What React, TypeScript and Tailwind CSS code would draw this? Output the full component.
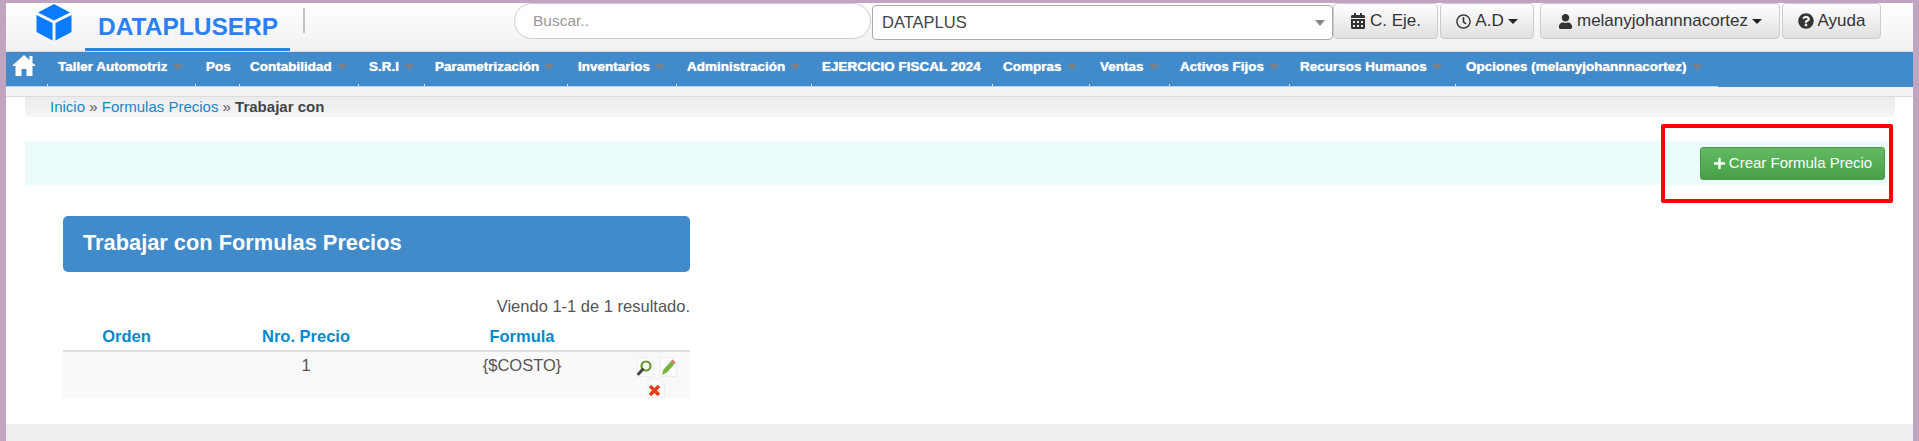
import React from "react";
import { FaCalendarAlt, FaRegClock, FaPlus, FaQuestionCircle, FaUser } from "react-icons/fa";

const menu = [
  { label: "Taller Automotriz", width: "w-[148px]", caret: true },
  { label: "Pos", width: "w-[44px]", caret: false },
  { label: "Contabilidad", width: "w-[119px]", caret: true },
  { label: "S.R.I", width: "w-[66px]", caret: true },
  { label: "Parametrización", width: "w-[143px]", caret: true },
  { label: "Inventarios", width: "w-[109px]", caret: true },
  { label: "Administración", width: "w-[135px]", caret: true },
  { label: "EJERCICIO FISCAL 2024", width: "w-[181px]", caret: false },
  { label: "Compras", width: "w-[97px]", caret: true },
  { label: "Ventas", width: "w-[80px]", caret: true },
  { label: "Activos Fijos", width: "w-[120px]", caret: true },
  { label: "Recursos Humanos", width: "w-[166px]", caret: true },
  { label: "Opciones (melanyjohannnacortez)", width: "w-[263px]", caret: true },
];

const Caret = ({ className }: { className: string }) => (
  <span className={`inline-block w-0 h-0 border-x-transparent ${className}`} />
);

const Cube = () => (
  <svg viewBox="0 0 38 38" className="w-[38px] h-[38px]" fill="#0a7bff">
    <path d="M19 1 L35 9.5 L19 17.5 L3 9.5 Z" />
    <path d="M1.5 12 L17.5 20 L17.5 37.5 L1.5 29 Z" />
    <path d="M36.5 12 L20.5 20 L20.5 37.5 L36.5 29 Z" />
  </svg>
);

const Home = () => (
  <svg viewBox="0 0 24 22" className="w-[24px] h-[22px]" fill="#fff">
    <path d="M12 1 L24 12 L20.5 12 L20.5 22 L14.5 22 L14.5 15 L9.5 15 L9.5 22 L3.5 22 L3.5 12 L0 12 Z" />
    <rect x="17.5" y="2" width="3" height="6" />
  </svg>
);

const PageBack = ({ children }: { children: React.ReactNode }) => (
  <svg viewBox="0 0 18 20" className="w-[18px] h-[20px]">
    <path d="M1 0.5 H12 L17.5 6 V19.5 H1 Z" fill="#fbfbfb" stroke="#eeeeee" />
    {children}
  </svg>
);

const Button = ({ className, children }: { className: string; children: React.ReactNode }) => (
  <div
    className={`flex items-center justify-center gap-[4px] rounded-[4px] border border-[#cccccc] bg-gradient-to-b from-white to-[#e0e0e0] text-[17px] text-[#333333] ${className}`}
  >
    {children}
  </div>
);

const Header = () => (
  <div className="flex h-[49px] bg-gradient-to-b from-white to-[#f1f1f1] border-b border-[#dddddd]">
    <div className="w-[29px]" />
    <Cube />
    <div className="ml-[12px] w-[205px] h-[48px] border-b-[3px] border-[#2f80ed] pl-[13px] pt-[8px] font-bold text-[24.5px] leading-[32px] text-[#2a80f5] whitespace-nowrap">
      DATAPLUSERP
    </div>
    <div className="ml-[13px] mt-[5px] w-[2px] h-[25px] bg-[#c4c4c4]" />
    <div className="ml-[209px] w-[357px] h-[36px] rounded-[18px] border border-[#cccccc] bg-white pl-[18px] text-[15.5px] leading-[34px] text-[#999999]">
      Buscar..
    </div>
    <div className="ml-[1px] mt-[2px] w-[461px] h-[35px] rounded-[4px] border border-[#aaaaaa] bg-white pl-[9px] pr-[7px] flex items-center justify-between text-[16.5px] text-[#444444]">
      DATAPLUS
      <Caret className="border-x-[5px] border-t-[6px] border-t-[#888888]" />
    </div>
    <div className="flex h-[36px]">
      <Button className="w-[105px]">
        <FaCalendarAlt size={16} />C. Eje.
      </Button>
      <Button className="w-[94px] ml-[2px]">
        <FaRegClock size={15} />A.D
        <Caret className="border-x-[5px] border-t-[5px] border-t-[#222222]" />
      </Button>
      <Button className="w-[240px] ml-[6px]">
        <FaUser size={15} />melanyjohannnacortez
        <Caret className="border-x-[5px] border-t-[5px] border-t-[#222222]" />
      </Button>
      <Button className="w-[99px] ml-[2px]">
        <FaQuestionCircle size={16} />Ayuda
      </Button>
    </div>
  </div>
);

const Nav = () => (
  <div className="-mx-[6px] h-[35px] flex border-x-[6px] border-[#5f7fb6] bg-[#428bca]">
    <div className="w-[41px] pl-[6px] pt-[2px] border-b border-[#b8d5ea]">
      <Home />
    </div>
    {menu.map((item) => (
      <div
        key={item.label}
        className={`${item.width} relative pl-[11px] pt-[6px] flex items-start gap-[5px] border-b border-[#b8d5ea] text-[13.5px] leading-[17px] font-bold text-white whitespace-nowrap [text-shadow:0_0_1px_#ffffff]`}
      >
        <span className="absolute left-0 bottom-0 w-px h-[2px] bg-[#dfeaf3]" />
        {item.label}
        {item.caret && <Caret className="border-x-[5px] border-t-[6px] border-t-[#7a8088] mt-[6px]" />}
      </div>
    ))}
  </div>
);

export default function App() {
  return (
    <div className="relative flex flex-col w-full h-[441px] overflow-hidden bg-white border-t-[3px] border-x-[6px] border-[#bfa5c0] font-['Liberation_Sans',Arial,sans-serif]">
      <Header />
      <Nav />
      <div className="bg-[#f3f3f3] h-[10px] border-b border-[#dcdcdc] -mx-[6px]" />

      <div className="ml-[19px] mr-[18px] h-[20px] pl-[25px] rounded-b-[6px] bg-gradient-to-b from-[#ececec] to-[#f6f6f6] text-[15px] leading-[19px] text-[#555555]">
        <span className="text-[#1a86c8]">Inicio</span> » <span className="text-[#1a86c8]">Formulas Precios</span> »{" "}
        <b className="text-[#444444]">Trabajar con</b>
      </div>

      <div className="mt-[24px] ml-[19px] mr-[25px] h-[44px] bg-[#ecfcfd] flex justify-end items-start pt-[6px] pr-[3px]">
        <div className="w-[185px] h-[33px] flex items-center justify-center gap-[3px] rounded-[3px] border border-[#4a9a4a] bg-gradient-to-b from-[#62bb62] to-[#479f47] text-[15px] text-white">
          <FaPlus size={13} />
          Crear Formula Precio
        </div>
      </div>

      {/* highlight drawn over the screenshot */}
      <div className="absolute left-[1655px] top-[121px] w-[232px] h-[79px] border-[4px] border-[#ff0000] rounded-[2px]" />

      <div className="mt-[31px] ml-[57px] w-[627px]">
        <div className="h-[56px] rounded-[5px] bg-[#428bca] pl-[20px] text-[21.8px] leading-[54px] font-bold text-white">
          Trabajar con Formulas Precios
        </div>
        <div className="mt-[24px] text-right text-[16.5px] leading-[20px] text-[#555555]">Viendo 1-1 de 1 resultado.</div>
        <div className="mt-[10px] grid grid-cols-[127px_232px_200px_68px] h-[26px] border-b-2 border-[#dddddd] text-center text-[16.5px] leading-[20px] font-bold text-[#0a88cc]">
          <div>Orden</div>
          <div>Nro. Precio</div>
          <div>Formula</div>
          <div />
        </div>
        <div className="grid grid-cols-[127px_232px_200px_68px] h-[46px] bg-[#f9f9f9] text-center text-[16.5px] leading-[20px] text-[#555555]">
          <div />
          <div className="pt-[3px]">1</div>
          <div className="pt-[3px]">{"{$COSTO}"}</div>
          <div className="flex justify-center">
            <div className="w-[46px] h-[46px] overflow-hidden flex flex-wrap justify-center content-start gap-x-[5px] gap-y-[1px] pt-[5px]">
              <PageBack>
                <circle cx="10" cy="9" r="4.5" fill="none" stroke="#6a9a2a" strokeWidth="2.2" />
                <path d="M6.5 12.5 L2.5 17" stroke="#444444" strokeWidth="3" strokeLinecap="round" />
              </PageBack>
              <PageBack>
                <path d="M3 18 L4.5 12.5 L12 4 L15.5 7 L8 15.5 Z" fill="#7cb342" />
                <path d="M12 4 L13.5 2.5 L16.5 5.5 L15.5 7 Z" fill="#e0705a" />
              </PageBack>
              <PageBack>
                <path d="M3 8 L12 17 M12 8 L3 17" stroke="#e2401c" strokeWidth="3.6" />
              </PageBack>
            </div>
          </div>
        </div>
      </div>

      <div className="mt-auto h-[17px] bg-[#eeeeee]" />
    </div>
  );
}
